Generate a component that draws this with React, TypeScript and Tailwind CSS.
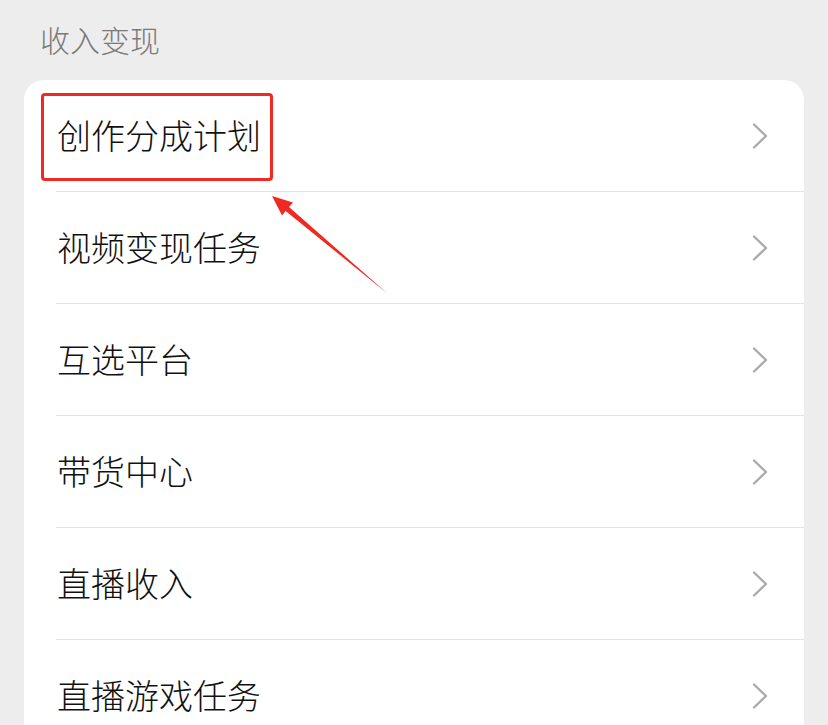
import React from 'react';

const items = ['创作分成计划', '视频变现任务', '互选平台', '带货中心', '直播收入', '直播游戏任务'];

function Chevron() {
    return (
        <svg width="16" height="26" viewBox="0 0 16 26" fill="none">
            <path d="M2 1.5 L14 13 L2 24.5" stroke="#aaaaaa" strokeWidth="2.4" strokeLinecap="round" strokeLinejoin="round" />
        </svg>
    );
}

export default function App() {
    return (
        <div
            className="relative w-[828px] h-[725px] overflow-hidden bg-[#ededed]"
            style={{ fontFamily: '"Noto Sans CJK SC", "Noto Sans", sans-serif' }}
        >
            <div className="h-[80px] pl-[40px] flex items-center">
                <span className="text-[30px] leading-none font-light text-[#7a7a7a] -mt-[2px]">收入变现</span>
            </div>

            <div className="mx-[24px] bg-white rounded-[20px] pl-[32px]">
                {items.map((label) => (
                    <div
                        key={label}
                        className="h-[112px] border-b border-[#e3e3e3] flex items-center justify-between pr-[36px]"
                    >
                        <span className="text-[34px] leading-none font-light text-[#111111] ml-[1px] -mt-[2px]">{label}</span>
                        <Chevron />
                    </div>
                ))}
            </div>

            {/* annotation */}
            <div className="absolute left-[41px] top-[93px] w-[232px] h-[88px] border-[3px] border-[#ee2a22] rounded-[4px]" />
            <svg className="absolute left-0 top-0" width="828" height="725">
                <polygon
                    points="272,196 293,202.6 289,207 388,294 285.6,210.9 282,215.4"
                    fill="#ee2a22"
                />
            </svg>
        </div>
    );
}
